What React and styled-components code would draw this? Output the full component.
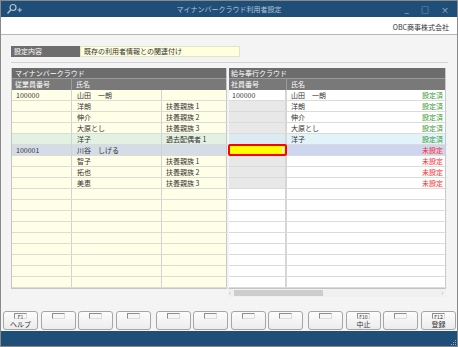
import React from 'react';
import styled, { createGlobalStyle } from 'styled-components';

const GlobalStyle = createGlobalStyle`
  html, body { margin: 0; padding: 0; background: #ffffff; }
  body { font-family: "Noto Sans CJK JP", "Noto Sans", sans-serif; }
  * { box-sizing: border-box; }
`;

const Window = styled.div`
  width: 458px;
  height: 347px;
  border: 1px solid #8a8a8a;
  display: flex;
  flex-direction: column;
  overflow: hidden;
  background: #f4f4f4;
`;

const TitleBar = styled.div`
  height: 16px;
  background: #1f4e79;
  display: grid;
  grid-template-columns: 60px 1fr 60px;
  align-items: center;
  color: #b6c4d4;
  font-size: 7px;
`;

const TitleText = styled.div`
  text-align: center;
`;

const Controls = styled.div`
  display: flex;
  justify-content: flex-end;
  align-items: center;
  gap: 12px;
  padding-right: 8px;
  color: #b6c4d4;
  font-size: 8px;
`;

const CompanyBar = styled.div`
  height: 18px;
  background: #ffffff;
  border-bottom: 1px solid #b8b8b8;
  display: flex;
  justify-content: flex-end;
  align-items: center;
  padding: 2px 8px 0 0;
  font-size: 7px;
  color: #333;
`;

const Body = styled.div`
  flex: 1;
  display: flex;
  flex-direction: column;
  background: #f4f4f4;
`;

const Content = styled.div`
  padding: 11px 9px 0 10px;
  display: flex;
  flex-direction: column;
`;

const SettingRow = styled.div`
  display: flex;
  height: 11px;
`;

const SettingLabel = styled.div`
  width: 69px;
  background: #6d6d6d;
  color: #ffffff;
  font-size: 7px;
  line-height: 11px;
  padding-left: 3px;
`;

const SettingValue = styled.div`
  width: 160px;
  background: #ffffe0;
  border: 1px solid #e4e4c4;
  color: #333;
  font-size: 7px;
  line-height: 9px;
  padding-left: 3px;
`;

const Divider = styled.div`
  margin-top: 5px;
  height: 1px;
  background: #d2d2d2;
`;

const Grids = styled.div`
  margin-top: 5px;
  display: grid;
  grid-template-columns: 216px 218px;
  column-gap: 1px;
`;

const Grid = styled.div`
  display: flex;
  flex-direction: column;
  border-left: 1px solid ${p => (p.$left ? '#c4c4c4' : 'transparent')};
  border-right: 1px solid #c8c8c8;
  border-bottom: 1px solid #c4c4c4;
`;

const GroupHeader = styled.div`
  height: 11px;
  background: #6c6c6c;
  color: #ffffff;
  font-size: 7px;
  line-height: 10px;
  padding-left: ${p => p.$pad || 3}px;
  border-bottom: 1px solid #9a9a9a;
`;

const HeaderRow = styled.div`
  display: grid;
  grid-template-columns: ${p => p.$cols};
  height: 11px;
  background: #797979;
`;

const HeaderCell = styled.div`
  color: #ffffff;
  font-size: 7px;
  line-height: 11px;
  padding-left: ${p => p.$pad || 3}px;
  border-right: 1px solid #9c9c9c;
  grid-column: span ${p => p.$span || 1};
  &:last-child { border-right: none; }
`;

const Row = styled.div`
  display: grid;
  grid-template-columns: ${p => p.$cols};
  height: 11px;
  background: ${p => p.$bg};
`;

const Cell = styled.div`
  display: flex;
  justify-content: space-between;
  padding: 0 ${p => p.$padR ?? 4}px 0 ${p => p.$padL ?? 4}px;
  font-size: 7px;
  line-height: 10px;
  color: #333;
  white-space: nowrap;
  overflow: hidden;
  background: ${p => p.$bg || 'transparent'};
  border-bottom: 1px solid #dcdcd6;
  border-right: ${p => p.$sep || '1px solid #d2d2d2'};
  &:last-child { border-right: none; }
`;

const InputCell = styled.div`
  position: relative;
  margin: -1px 0 0 -1px;
  height: 12px;
  background: #ffff00;
  border: 2px solid #ff0000;
  border-radius: 2px;
  display: flex;
  justify-content: flex-end;
  align-items: center;
  padding-right: 1px;
`;

const Caret = styled.span`
  width: 2px;
  height: 6px;
  background: #e8e8e8;
`;

const Status = styled.span`
  color: ${p => (p.$done ? '#2f9a2f' : '#ff2a2a')};
`;

const ScrollBar = styled.div`
  grid-column: 2;
  height: 8px;
  background: #f0f0f0;
  display: flex;
  align-items: center;
  padding: 0 3px 0 1px;
  color: #a0a0a0;
  font-size: 6px;
  line-height: 8px;
`;

const Thumb = styled.div`
  width: 89px;
  height: 6px;
  background: #cdcdcd;
  margin-left: 3px;
`;

const Spacer = styled.div`
  flex: 1;
`;

const FKeyBar = styled.div`
  margin-top: auto;
  padding: 0 1px 1px 2px;
  display: flex;
  gap: 5px;
`;

const FKeyGroup = styled.div`
  flex: 1;
  display: flex;
  gap: 2.5px;
`;

const FKey = styled.div`
  flex: 1;
  height: 19px;
  border: 1px solid #a6a6a6;
  border-radius: 3px;
  background: linear-gradient(#fcfcfc, #ececec);
  display: flex;
  flex-direction: column;
  align-items: center;
`;

const KeyTag = styled.div`
  margin-top: 1px;
  width: 13px;
  height: 6px;
  border-top: 1px solid #8e8e8e;
  border-left: 1px solid ${p => (p.$text ? '#8e8e8e' : '#8e8e8e')};
  border-right: 1px solid #dcdcdc;
  border-bottom: 1px solid #dcdcdc;
  background: #f7f7f7;
  font-size: 5px;
  line-height: 5px;
  color: #333;
  text-align: center;
`;

const KeyLabel = styled.div`
  font-size: 7px;
  line-height: 9px;
  color: #333;
  margin-top: 1px;
`;

const BottomBar = styled.div`
  height: 15px;
  background: #1f4e79;
  display: flex;
  justify-content: flex-end;
  align-items: flex-end;
`;

const L_COLS = '60px 90px 66px';
const R_COLS = '58px 160px';

const leftRows = [
  { no: '100000', name: '山田　一朗', rel: '' },
  { no: '', name: '洋朗', rel: '扶養親族 1' },
  { no: '', name: '伸介', rel: '扶養親族 2' },
  { no: '', name: '大原とし', rel: '扶養親族 3' },
  { no: '', name: '洋子', rel: '過去配偶者 1', bg: '#e3f1e3' },
  { no: '100001', name: '川谷　しげる', rel: '', bg: '#d4dce7' },
  { no: '', name: '智子', rel: '扶養親族 1' },
  { no: '', name: '拓也', rel: '扶養親族 2' },
  { no: '', name: '美恵', rel: '扶養親族 3' },
  ...Array.from({ length: 9 }, () => ({ no: '', name: '', rel: '' })),
];

const rightRows = [
  { no: '100000', noBg: '#ffffff', name: '山田　一朗', st: '設定済', done: true },
  { no: '', noBg: '#e8e8e8', name: '洋朗', st: '設定済', done: true },
  { no: '', noBg: '#e8e8e8', name: '伸介', st: '設定済', done: true },
  { no: '', noBg: '#e8e8e8', name: '大原とし', st: '設定済', done: true },
  { no: '', noBg: '#dcebf3', name: '洋子', st: '設定済', done: true, bg: '#e2f3fa' },
  { input: true, name: '', st: '未設定', bg: '#cdd5f1' },
  { no: '', noBg: '#e8e8e8', name: '', st: '未設定' },
  { no: '', noBg: '#e8e8e8', name: '', st: '未設定' },
  { no: '', noBg: '#e8e8e8', name: '', st: '未設定' },
  ...Array.from({ length: 9 }, () => ({ no: '', noBg: '#ffffff', name: '', st: '' })),
];

const fkeys = [
  [{ k: 'F1', l: 'ヘルプ' }, {}, {}, {}],
  [{}, {}, {}, {}],
  [{}, { k: 'F10', l: '中止' }, {}, { k: 'F12', l: '登録' }],
];

function AppIcon() {
  return (
    <svg width="18" height="12" viewBox="0 0 18 12" style={{ marginLeft: 5 }}>
      <circle cx="7" cy="4.5" r="3" fill="none" stroke="#b6c4d4" strokeWidth="1.2" />
      <line x1="4.8" y1="6.8" x2="1.5" y2="10.5" stroke="#b6c4d4" strokeWidth="1.4" />
      <line x1="11.5" y1="7" x2="16" y2="7" stroke="#b6c4d4" strokeWidth="1" />
      <line x1="13.75" y1="4.8" x2="13.75" y2="9.2" stroke="#b6c4d4" strokeWidth="1" />
    </svg>
  );
}

function Grip() {
  return (
    <svg width="6" height="6" viewBox="0 0 6 6">
      <rect x="4" y="0" width="1" height="1" fill="#9ab" />
      <rect x="2" y="2" width="1" height="1" fill="#9ab" />
      <rect x="4" y="2" width="1" height="1" fill="#9ab" />
      <rect x="0" y="4" width="1" height="1" fill="#9ab" />
      <rect x="2" y="4" width="1" height="1" fill="#9ab" />
      <rect x="4" y="4" width="1" height="1" fill="#9ab" />
    </svg>
  );
}

export default function App() {
  return (
    <>
      <GlobalStyle />
      <Window>
        <TitleBar>
          <AppIcon />
          <TitleText>マイナンバークラウド利用者設定</TitleText>
          <Controls>
            <span>_</span>
            <span>□</span>
            <span>×</span>
          </Controls>
        </TitleBar>
        <CompanyBar>OBC商事株式会社</CompanyBar>
        <Body>
          <Content>
            <SettingRow>
              <SettingLabel>設定内容</SettingLabel>
              <SettingValue>既存の利用者情報との関連付け</SettingValue>
            </SettingRow>
            <Divider />
            <Grids>
              <Grid $left>
                <GroupHeader>マイナンバークラウド</GroupHeader>
                <HeaderRow $cols={L_COLS}>
                  <HeaderCell>従業員番号</HeaderCell>
                  <HeaderCell $span={2} $pad={4}>氏名</HeaderCell>
                </HeaderRow>
                {leftRows.map((r, i) => (
                  <Row key={i} $cols={L_COLS} $bg={r.bg || '#fffee6'}>
                    <Cell>{r.no}</Cell>
                    <Cell $padL={5}>{r.name}</Cell>
                    <Cell>{r.rel}</Cell>
                  </Row>
                ))}
              </Grid>
              <Grid>
                <GroupHeader $pad={2}>給与奉行クラウド</GroupHeader>
                <HeaderRow $cols={R_COLS}>
                  <HeaderCell $pad={2}>社員番号</HeaderCell>
                  <HeaderCell $pad={4}>氏名</HeaderCell>
                </HeaderRow>
                {rightRows.map((r, i) => (
                  <Row key={i} $cols={R_COLS} $bg={r.bg || '#ffffff'}>
                    {r.input ? (
                      <InputCell>
                        <Caret />
                      </InputCell>
                    ) : (
                      <Cell $padL={3} $bg={r.noBg} $sep="2px solid #d6d6d6">{r.no}</Cell>
                    )}
                    <Cell $padL={4} $padR={4}>
                      <span>{r.name}</span>
                      <Status $done={r.done}>{r.st}</Status>
                    </Cell>
                  </Row>
                ))}
              </Grid>
              <ScrollBar>
                <span>‹</span>
                <Thumb />
                <Spacer />
                <span>›</span>
              </ScrollBar>
            </Grids>
          </Content>
          <FKeyBar>
            {fkeys.map((g, gi) => (
              <FKeyGroup key={gi}>
                {g.map((f, fi) => (
                  <FKey key={fi}>
                    <KeyTag $text={!!f.k}>{f.k}</KeyTag>
                    {f.l && <KeyLabel>{f.l}</KeyLabel>}
                  </FKey>
                ))}
              </FKeyGroup>
            ))}
          </FKeyBar>
        </Body>
        <BottomBar>
          <Grip />
        </BottomBar>
      </Window>
    </>
  );
}
